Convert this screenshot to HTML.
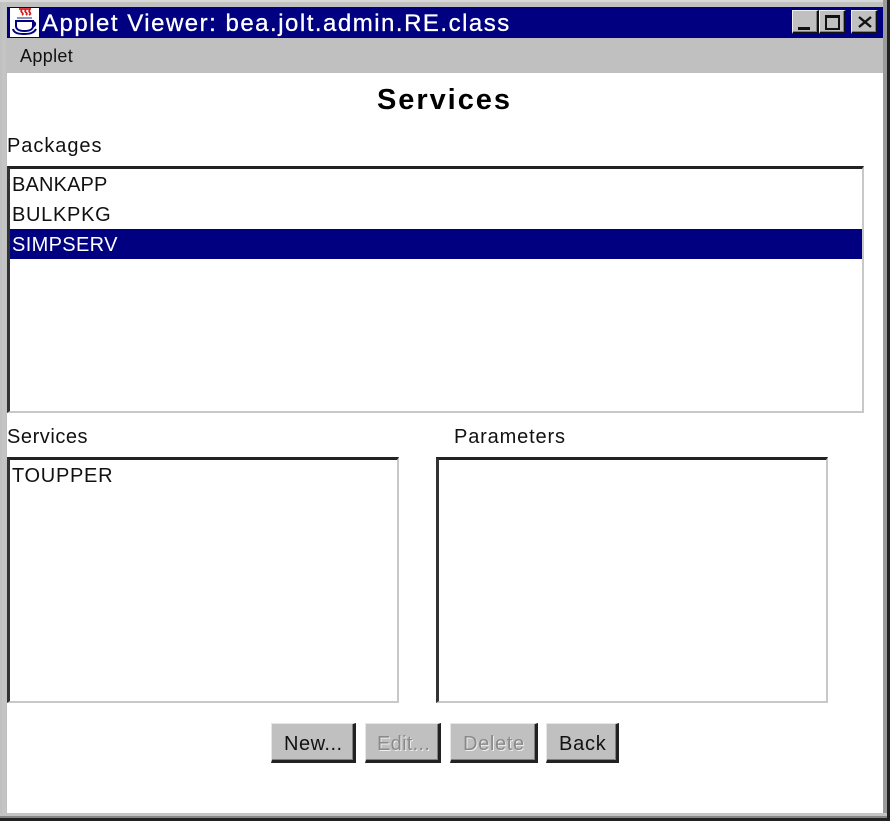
<!DOCTYPE html>
<html>
<head>
<meta charset="utf-8">
<style>
html,body{margin:0;padding:0;background:#fff;}
#w{position:relative;width:890px;height:821px;overflow:hidden;background:#fff;font-family:"Liberation Sans",sans-serif;color:#111;filter:blur(0.35px);}
#w div{position:absolute;box-sizing:border-box;}
.t{white-space:nowrap;line-height:1;}
.list{background:#fff;border-top:3px solid #222;border-left:3px solid #333;border-right:2px solid #c8c8c8;border-bottom:2px solid #c8c8c8;}
.btn{background:#c0c0c0;border-right:3px solid #222;border-bottom:3px solid #222;border-top:1px solid #e6e6e6;border-left:1px solid #e6e6e6;box-shadow:inset -1px -1px 0 #808080;}
.wb{background:#c0c0c0;border-top:1px solid #eee;border-left:1px solid #eee;border-right:2px solid #111;border-bottom:2px solid #111;box-shadow:inset -1px -1px 0 #808080;}
</style>
</head>
<body>
<div id="w">
  <!-- frame -->
  <div style="left:0;top:0;width:890px;height:821px;background:#c0c0c0;"></div>
  <div style="left:0;top:0;width:889px;height:2px;background:#d8d8d8;"></div>
  <div style="left:2px;top:2px;width:4px;height:812px;background:#c4c4c4;"></div>
  <div style="left:883px;top:0;width:4px;height:821px;background:#9a9a9a;"></div>
  <div style="left:887px;top:0;width:3px;height:821px;background:#222;"></div>
  <div style="left:0;top:813px;width:887px;height:3px;background:#c4c4c4;"></div>
  <div style="left:0;top:816px;width:887px;height:2px;background:#888;"></div>
  <div style="left:0;top:818px;width:890px;height:3px;background:#222;"></div>

  <!-- title -->
  <div style="left:7px;top:7px;width:876px;height:31px;background:#000080;"></div>
  <svg style="position:absolute;left:10px;top:8px;" width="29" height="29" viewBox="0 0 29 29">
    <rect width="29" height="29" fill="#fff"/>
    <path d="M9 1h12M12 2c-3 2 3 3 0 5M16 2c-3 2 3 3 0 5M20 2c-3 2 3 3-1 5" stroke="#d02020" stroke-width="1.8" fill="none"/>
    <path d="M7 10h15" stroke="#6a6aa8" stroke-width="1.5"/>
    <path d="M6 13h17v5c0 3-3 5-8.5 5S6 21 6 18zM23 14c3 0 3 4-1 5" stroke="#000080" stroke-width="2" fill="none"/>
    <path d="M3 21c1 4 5 5 11 5s10-1 12-5" stroke="#000080" stroke-width="2" fill="none"/>
  </svg>
  <div class="t" style="left:42px;top:12px;font-size:24px;color:#fff;letter-spacing:1.5px;-webkit-text-stroke:0.3px #fff;">Applet Viewer: bea.jolt.admin.RE.class</div>

  <!-- window buttons -->
  <div class="wb" style="left:792px;top:10px;width:27px;height:24px;"></div>
  <div style="left:798px;top:27px;width:12px;height:3px;background:#111;"></div>
  <div class="wb" style="left:819px;top:10px;width:27px;height:24px;"></div>
  <div style="left:825px;top:15px;width:15px;height:15px;border:2px solid #111;border-top-width:3px;"></div>
  <div class="wb" style="left:851px;top:10px;width:27px;height:24px;"></div>
  <svg style="position:absolute;left:858px;top:16px;" width="14" height="12" viewBox="0 0 14 12"><path d="M1 1l12 10M13 1L1 11" stroke="#111" stroke-width="2.4" fill="none"/></svg>

  <!-- menu -->
  <div style="left:6px;top:38px;width:877px;height:35px;background:#c0c0c0;"></div>
  <div class="t" style="left:20px;top:47px;font-size:18px;letter-spacing:0.35px;">Applet</div>

  <!-- client -->
  <div style="left:7px;top:73px;width:876px;height:740px;background:#fff;"></div>

  <div class="t" style="left:377px;top:86px;font-size:29px;font-weight:bold;letter-spacing:1.95px;color:#000;">Services</div>

  <div class="t" style="left:7px;top:136px;font-size:20px;letter-spacing:0.95px;">Packages</div>
  <div class="list" style="left:7px;top:166px;width:857px;height:247px;"></div>
  <div class="t" style="left:12px;top:175px;font-size:20px;letter-spacing:0.15px;">BANKAPP</div>
  <div class="t" style="left:12px;top:205px;font-size:20px;letter-spacing:0.7px;">BULKPKG</div>
  <div style="left:10px;top:229px;width:852px;height:30px;background:#000080;"></div>
  <div class="t" style="left:12px;top:235px;font-size:20px;color:#fff;letter-spacing:0.35px;">SIMPSERV</div>

  <div class="t" style="left:7px;top:427px;font-size:20px;letter-spacing:0.55px;">Services</div>
  <div class="t" style="left:454px;top:427px;font-size:20px;letter-spacing:0.85px;">Parameters</div>

  <div class="list" style="left:7px;top:457px;width:392px;height:246px;"></div>
  <div class="t" style="left:12px;top:466px;font-size:20px;letter-spacing:0.7px;">TOUPPER</div>
  <div class="list" style="left:436px;top:457px;width:392px;height:246px;"></div>

  <!-- buttons -->
  <div class="btn" style="left:271px;top:723px;width:85px;height:40px;"></div>
  <div class="t" style="left:284px;top:734px;font-size:20px;letter-spacing:0.5px;">New...</div>
  <div class="btn" style="left:365px;top:723px;width:76px;height:40px;"></div>
  <div class="t" style="left:377px;top:734px;font-size:20px;color:#8a8a8a;text-shadow:1px 1px 0 #eee;letter-spacing:0.3px;">Edit...</div>
  <div class="btn" style="left:450px;top:723px;width:88px;height:40px;"></div>
  <div class="t" style="left:463px;top:734px;font-size:20px;color:#8a8a8a;text-shadow:1px 1px 0 #eee;letter-spacing:0.65px;">Delete</div>
  <div class="btn" style="left:546px;top:723px;width:73px;height:40px;"></div>
  <div class="t" style="left:559px;top:734px;font-size:20px;letter-spacing:0.75px;">Back</div>
</div>
</body>
</html>
